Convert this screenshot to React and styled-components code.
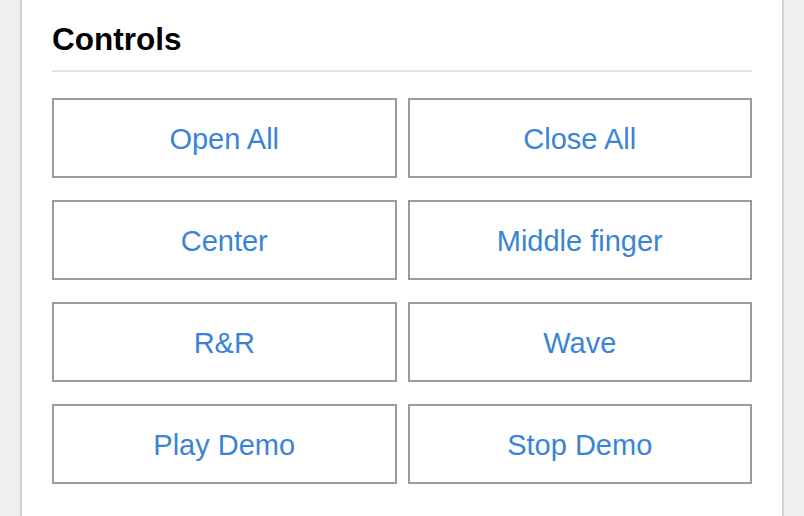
import React from "react";
import styled, { createGlobalStyle } from "styled-components";

const Global = createGlobalStyle`
  html, body { margin: 0; padding: 0; background: #efefef; }
  body { font-family: "Liberation Sans", Arial, Helvetica, sans-serif; }
`;

const Page = styled.div`
  display: flex;
  justify-content: flex-start;
  padding: 0 20px;
  min-height: 516px;
  box-sizing: border-box;
  background: #efefef;
`;

const Panel = styled.section`
  flex: 1;
  background: #ffffff;
  border-left: 2px solid #cfcfcf;
  border-right: 2px solid #cfcfcf;
  padding: 21px 30px 32px;
  box-sizing: border-box;
`;

const Heading = styled.h2`
  margin: 0;
  font-size: 31.5px;
  line-height: 36px;
  font-weight: 700;
  color: #000;
  padding-bottom: 13px;
  border-bottom: 2px solid #e2e2e2;
`;

const Grid = styled.div`
  display: grid;
  grid-template-columns: 1fr 1fr;
  grid-auto-rows: 80px;
  column-gap: 11px;
  row-gap: 22px;
  margin-top: 26px;
`;

const Button = styled.button`
  display: flex;
  align-items: center;
  justify-content: center;
  background: #fff;
  border: 2px solid #9b9b9b;
  border-radius: 0;
  margin: 0;
  padding: 2px 0 0;
  font-family: "Liberation Sans", Arial, Helvetica, sans-serif;
  font-size: 29px;
  color: #3a84d8;
  cursor: pointer;
`;

const labels = [
  "Open All",
  "Close All",
  "Center",
  "Middle finger",
  "R&R",
  "Wave",
  "Play Demo",
  "Stop Demo",
];

export default function App() {
  return (
    <>
      <Global />
      <Page>
        <Panel>
          <Heading>Controls</Heading>
          <Grid>
            {labels.map((l) => (
              <Button key={l}>{l}</Button>
            ))}
          </Grid>
        </Panel>
      </Page>
    </>
  );
}
